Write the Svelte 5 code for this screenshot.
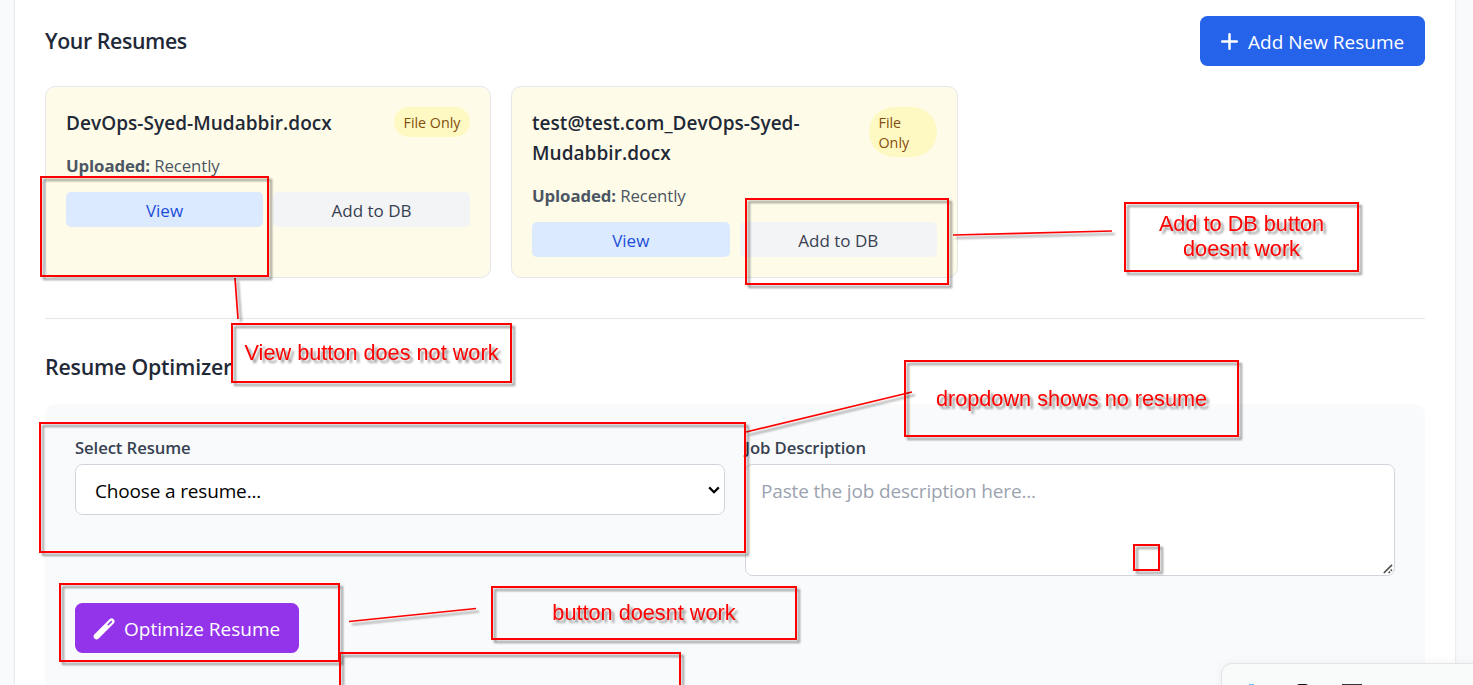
<script>
  const resumes = [
    { name: 'DevOps-Syed-Mudabbir.docx', uploaded: 'Recently' },
    { name: 'test@test.com_DevOps-Syed-Mudabbir.docx', uploaded: 'Recently' }
  ];

  const notes = [
    { x: 40, y: 176, w: 229, h: 101 },
    { x: 745, y: 198, w: 204, h: 87 },
    { x: 1124, y: 202, w: 235, h: 70, text: 'Add to DB button\ndoesnt work' },
    { x: 231, y: 323, w: 281, h: 60, text: 'View button does not work' },
    { x: 39, y: 422, w: 707, h: 131 },
    { x: 904, y: 360, w: 335, h: 77, text: 'dropdown shows no resume', low: true },
    { x: 1133, y: 544, w: 27, h: 27 },
    { x: 59, y: 583, w: 281, h: 79 },
    { x: 491, y: 586, w: 306, h: 54, text: 'button doesnt work' },
    { x: 339, y: 652, w: 342, h: 60 }
  ];

  const lines = [
    [235, 278, 238, 319],
    [953, 235, 1112, 231],
    [746, 432, 912, 392],
    [349, 621.5, 476, 608.5]
  ];
</script>

<div class="page">
  <main>
    <header>
      <h2>Your Resumes</h2>
      <button class="add">
        <svg width="17" height="17" viewBox="0 0 17 17"><path d="M8.5 1.2v14.6M1.2 8.5h14.6" stroke="#fff" stroke-width="2.5" stroke-linecap="round" /></svg>
        <span>Add New Resume</span>
      </button>
    </header>

    <div class="cards">
      {#each resumes as r}
        <article>
          <div class="top">
            <h3>{r.name}</h3>
            <span class="badge">File Only</span>
          </div>
          <p><strong>Uploaded:</strong> {r.uploaded}</p>
          <div class="actions">
            <button class="view">View</button>
            <button class="db">Add to DB</button>
          </div>
        </article>
      {/each}
    </div>

    <section>
      <h2>Resume Optimizer</h2>
      <div class="panel">
        <div class="fields">
          <div>
            <label for="resume">Select Resume</label>
            <div class="control">
              <select id="resume"><option>Choose a resume...</option></select>
              <svg class="chevron" width="12" height="8" viewBox="0 0 12 8"><path d="M1.2 1.4 6 6.2l4.8-4.8" fill="none" stroke="#000" stroke-width="2.2" /></svg>
            </div>
          </div>
          <div>
            <label for="job">Job Description</label>
            <div class="control">
              <textarea id="job" placeholder="Paste the job description here..."></textarea>
              <svg class="grip" width="10" height="10" viewBox="0 0 10 10"><path d="M.8 9 9 .8M5.6 9 7 7.6M7.8 6.8 9 5.6" stroke="#505050" stroke-width="1.7" /></svg>
            </div>
          </div>
        </div>
        <button class="optimize">
          <svg width="22" height="22" viewBox="0 0 22 22">
            <path d="M3.6 18.4 18.6 3.4" stroke="#fff" stroke-width="5.8" stroke-linecap="round" />
            <path d="M15.2 6.8 18.4 3.6" stroke="#9333ea" stroke-width="1.5" stroke-linecap="round" />
          </svg>
          <span>Optimize Resume</span>
        </button>
      </div>
    </section>
  </main>

  <div class="dock">
    <i class="blue"></i><i class="round"></i><i class="flat"></i>
  </div>

  <svg class="lines" width="1473" height="685">
    {#each lines as [x1, y1, x2, y2]}
      <line {x1} {y1} {x2} {y2} />
    {/each}
  </svg>
  {#each notes as n}
    <div class="note" class:low={n.low} style="left:{n.x}px;top:{n.y}px;width:{n.w}px;height:{n.h}px">{n.text ?? ''}</div>
  {/each}
</div>

<style>
  :global(body) { margin: 0; }
  .page, .page * { box-sizing: border-box; }
  .page {
    position: relative;
    height: 685px;
    overflow: hidden;
    padding: 0 18px 0 15px;
    background: #f9fafb;
    font-family: 'Open Sans', 'Noto Sans', sans-serif;
    color: #1f2937;
  }
  main {
    height: 800px;
    padding: 16px 30px 0;
    background: #fff;
    box-shadow: 0 0 2px rgba(0, 0, 0, 0.18);
  }
  h2, h3, p { margin: 0; }
  button { border: 0; padding: 0; font-family: inherit; }
  header { display: flex; justify-content: space-between; align-items: center; height: 50px; }
  h2 { font-size: 21.3px; line-height: 35px; font-weight: 600; letter-spacing: -0.2px; }
  header h2 { letter-spacing: -0.4px; padding-bottom: 2px; }
  .add, .optimize {
    display: flex;
    align-items: center;
    height: 50px;
    border-radius: 7.5px;
    color: #fff;
    font-size: 19px;
    white-space: nowrap;
  }
  .add { width: 225px; padding: 0 0 0 21px; gap: 10px; background: #2563eb; }
  .add span { padding-top: 2px; }
  .cards { display: grid; grid-template-columns: 446px 447px; gap: 20px; margin-top: 20px; }
  article {
    height: 192px;
    padding: 20px;
    border: 1px solid #e5e7eb;
    border-radius: 10px;
    background: #fefce8;
  }
  .top { display: flex; justify-content: space-between; align-items: flex-start; margin-bottom: 15px; }
  h3 { padding-top: 1px; margin-bottom: -1px; font-size: 19px; line-height: 30px; font-weight: 600; letter-spacing: 0.04px; }
  article:nth-child(2) h3 { width: 290px; }
  .badge {
    padding: 6px 9.5px 4px;
    border-radius: 25px;
    background: #fef9c3;
    color: #854d0e;
    font-size: 14.3px;
    line-height: 20px;
  }
  article:nth-child(2) .badge { width: 68px; }
  p { position: relative; top: 1px; font-size: 16.8px; line-height: 25px; letter-spacing: -0.1px; color: #4b5563; margin-bottom: 15px; }
  .actions { display: grid; grid-template-columns: 1fr 1fr; gap: 10px; }
  .actions button { height: 35px; border-radius: 5px; font-size: 17px; line-height: 25px; padding-top: 1px; }
  .view { background: #dbeafe; color: #1d4ed8; }
  .db { background: #f3f4f6; color: #374151; }
  section { margin-top: 40px; padding-top: 30px; border-top: 1px solid #e5e7eb; }
  .panel { height: 400px; margin-top: 20px; padding: 30px; border-radius: 10px; background: #f9fafb; }
  .fields { display: grid; grid-template-columns: 1fr 1fr; gap: 20px; height: 169px; }
  label { display: block; padding-top: 1px; margin-bottom: 4px; font-size: 16.7px; line-height: 25px; font-weight: 600; letter-spacing: -0.1px; color: #374151; }
  .control { position: relative; }
  select, textarea {
    display: block;
    width: 100%;
    border: 1px solid #d1d5db;
    border-radius: 7.5px;
    background: #fff;
    font-family: inherit;
    font-size: 19px;
    letter-spacing: -0.16px;
    outline: 0;
  }
  select { height: 51px; padding: 3px 19px 0; color: #000; appearance: none; }
  .chevron { position: absolute; right: 5px; top: 22px; }
  textarea { height: 112px; padding: 11px 15px; line-height: 30px; resize: none; }
  textarea::placeholder { color: #9ca3af; }
  .grip { position: absolute; right: 2px; bottom: 2px; }
  .optimize { width: 224px; padding: 1px 0 0 18px; gap: 9px; background: #9333ea; }
  .dock {
    position: absolute;
    left: 1221px;
    top: 663px;
    width: 270px;
    height: 60px;
    border: 1px solid #e3e4e5;
    border-radius: 11px;
    background: #f9fafa;
    box-shadow: 0 0 10px rgba(0, 0, 0, 0.06);
  }
  .dock i { position: absolute; top: 20px; height: 10px; }
  .blue { left: 27px; width: 5px; background: #62c5ee; }
  .round { left: 74px; width: 13px; background: #111; border-radius: 4px 4px 0 0; }
  .flat { left: 120px; width: 20px; background: #333; }
  .lines { position: absolute; left: 0; top: 0; filter: drop-shadow(3px 3px 1px rgba(0, 0, 0, 0.4)); }
  line { stroke: #f00; stroke-width: 1.7; }
  .note {
    position: absolute;
    display: flex;
    align-items: center;
    justify-content: center;
    padding-bottom: 2px;
    border: 2px solid #f00;
    color: #f00;
    font: 21.7px/25px 'Liberation Sans', Arial, sans-serif;
    text-align: center;
    white-space: pre;
    filter: drop-shadow(3px 3px 1px rgba(0, 0, 0, 0.4));
  }
  .low { padding-bottom: 0; }
</style>
